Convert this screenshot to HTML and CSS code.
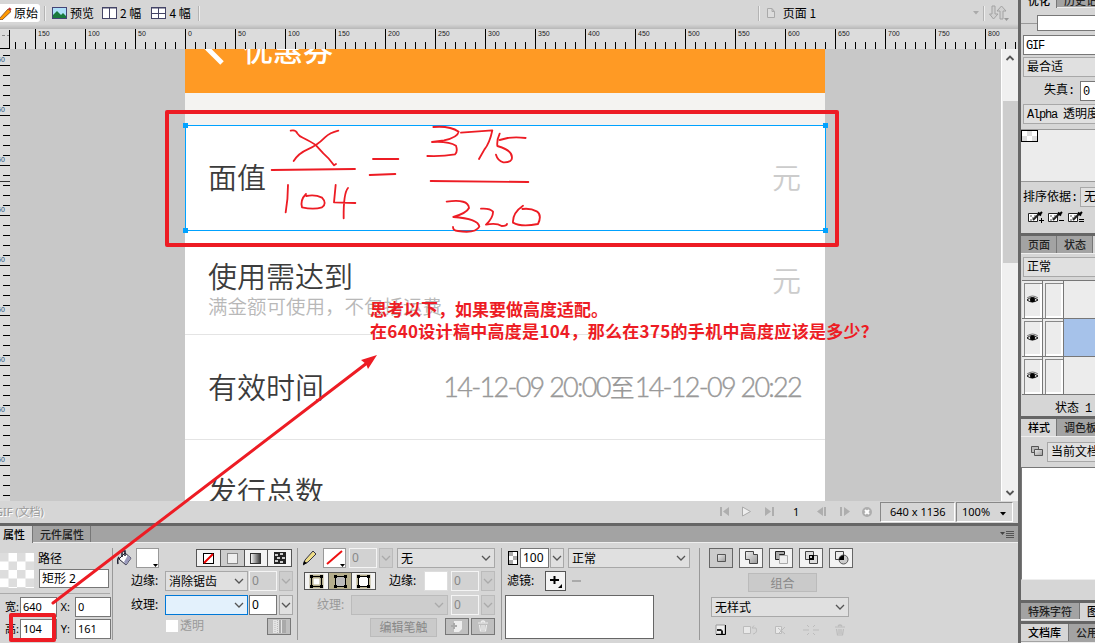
FILE: index.html
```html
<!DOCTYPE html>
<html lang="zh-CN">
<head>
<meta charset="utf-8">
<title>页面 1</title>
<link rel="stylesheet" href="styles.css">
</head>
<body>
<svg width="0" height="0" class="defs">
  <defs>
    <pattern id="chk2" width="17" height="17" patternUnits="userSpaceOnUse"><rect width="17" height="17" fill="#fff"/><path d="M0 0h8.500v8.500h-8.500zM8.500 8.500h8.500v8.500h-8.500z" fill="#ddd"/></pattern>
    <linearGradient id="gr"><stop offset="0" stop-color="#fff"/><stop offset="1" stop-color="#333"/></linearGradient>
    <linearGradient id="dg" x2="1" y2="1"><stop offset="0" stop-color="#eee"/><stop offset="1" stop-color="#999"/></linearGradient>
    <symbol id="eye" viewBox="0 0 13 10"><path d="M1 5Q6 0 12 5Q6 9 1 5z" fill="#ddd" stroke="#111"/><circle cx="6.500" cy="4.800" r="2.500" fill="#000"/><path d="M1 3Q6.500-1 12 3" fill="none" stroke="#555" stroke-width=".8"/></symbol>
    <symbol id="down" viewBox="0 0 10 6"><path d="M1 1l4 4 4-4" fill="none" stroke="currentColor" stroke-width="1.300"/></symbol>
    <symbol id="trash" viewBox="0 0 12 12"><path d="M1 3h10M4 2q2-2 4 0M2.500 5l1 6h5l1-6M5 5v5M7 5v5" fill="none" stroke="currentColor" stroke-width="1.200"/></symbol>
    <symbol id="dropper" viewBox="0 0 17 12"><path d="M.5 2.500h9v8h-9z" fill="#fff" stroke="#222"/><path d="M2 4h2v2h-2zM6 4h2v2h-2zM4 6h2v2h-2zM2 8h2v2h-2z" fill="#aaa"/><path d="M5 9l6-6" stroke="#222" stroke-width="2"/><path d="M10 1.500l3 3M11 4l3-3" stroke="#000" stroke-width="2"/></symbol>
  </defs>
</svg>
<div class="app">
  <main class="left">
    <div class="toolbar">
      <div class="mode on"><svg width="12" height="13" viewBox="0 0 12 13"><path d="M-1 12L8 2l3 2.500L2 13z" fill="#f90" stroke="#742" stroke-width=".8"/><path d="M8 2l1.500-1.500 2 1.500-1 2z" fill="#b33"/></svg>原始</div>
      <i class="sep s1"></i>
      <div class="mode m2"><svg width="15" height="12"><rect x=".5" y=".5" width="14" height="11" fill="#aee0fa" stroke="#447"/><path d="M1 11V8l4-4 4 4 2-2 3 3v2z" fill="#197a3d"/></svg>预览</div>
      <div class="mode m3"><svg width="15" height="12"><rect x=".5" y=".5" width="14" height="11" fill="#fff" stroke="#446"/><path d="M7.500 0v12M0 1h15" stroke="#446"/></svg>2 幅</div>
      <div class="mode m4"><svg width="15" height="12"><rect x=".5" y=".5" width="14" height="11" fill="#fff" stroke="#446"/><path d="M7.500 0v12M0 1h15M0 6.500h15" stroke="#446"/></svg>4 幅</div>
      <i class="sep s2"></i>
      <i class="sep s3"></i>
      <div class="doc"><svg width="8" height="10"><path d="M.5.5h4.500l2.500 3v6h-7zM5 .5v3h2.500" fill="#ddd" stroke="#aaa"/></svg>页面 1</div>
      <svg class="docmenu" width="6" height="4"><path d="M0 0h6L3 3.500z" fill="#aaa"/></svg>
      <i class="sep s4"></i>
      <svg class="updown" width="21" height="17"><path d="M3 1h3v8h3l-4.500 5L.5 9H3zM11 14V6H8l4.500-5L17 6h-3v8z" fill="#d0d0d0" stroke="#a2a2a2"/><path d="M15 13h5l-2.500 3z" fill="#999"/></svg>
    </div>
    <svg class="hruler" width="1018" height="20">
      <defs>
        <pattern id="minor" x="5" width="10" height="20" patternUnits="userSpaceOnUse"><path d="M0 13h1v7h-1z"/></pattern>
        <pattern id="major" x="35" width="50" height="20" patternUnits="userSpaceOnUse"><path d="M0 0h1v20h-1z"/></pattern>
        <pattern id="vminor" y="6" width="10" height="10" patternUnits="userSpaceOnUse"><path d="M3 0h7v1h-7z"/></pattern>
        <pattern id="vmajor" y="16" width="10" height="50" patternUnits="userSpaceOnUse"><path d="M0 0h10v1h-10z"/></pattern>
      </defs>
      <rect x="11" width="1007" height="20" fill="url(#minor)"/><rect x="11" width="1007" height="20" fill="url(#major)"/>
      <path d="M9.500 1v19M0 19.500h10" stroke="#000"/><path d="M2 6.500h7" stroke="#888" stroke-dasharray="3 2"/>
      <g class="nums"><text x="38" y="7">150</text><text x="88" y="7">100</text><text x="138" y="7">50</text><text x="188" y="7">0</text><text x="238" y="7">50</text><text x="288" y="7">100</text><text x="338" y="7">150</text><text x="388" y="7">200</text><text x="438" y="7">250</text><text x="488" y="7">300</text><text x="538" y="7">350</text><text x="588" y="7">400</text><text x="638" y="7">450</text><text x="688" y="7">500</text><text x="738" y="7">550</text><text x="788" y="7">600</text><text x="838" y="7">650</text><text x="888" y="7">700</text><text x="938" y="7">750</text><text x="988" y="7">800</text></g>
    </svg>
    <div class="work">
      <svg class="vruler" width="10" height="452">
        <rect width="10" height="452" fill="url(#vminor)"/><rect width="10" height="452" fill="url(#vmajor)"/><path d="M0 132.500h10" stroke="#333"/>
        <g class="nums blue"><text x="-3" y="13">50</text><text x="-3" y="63">50</text><text x="-3" y="113">50</text><text x="-3" y="163">50</text><text x="-3" y="213">50</text><text x="-3" y="263">50</text><text x="-3" y="313">50</text><text x="-3" y="363">50</text><text x="-3" y="413">50</text></g>
      </svg>
      <div class="stage">
        <div class="phone">
          <header class="head"><svg width="40" height="16"><path d="M19-4L37 14" stroke="#fff" stroke-width="5"/></svg><span>优惠券</span></header>
          <div class="gap"></div>
          <div class="item first"><span class="name">面值</span><span class="unit">元</span></div>
          <div class="item second"><div><div class="name">使用需达到</div><div class="hint">满金额可使用，不包括运费</div></div><span class="unit">元</span></div>
          <div class="item third"><span class="name">有效时间</span><span class="date">14-12-09 20:00<b>至</b>14-12-09 20:22</span></div>
          <div class="item last"><span class="name">发行总数</span></div>
        </div>
      </div>
      <div class="scroll"><svg width="10" height="6"><path d="M1.500 5l3.500-3.500L8.500 5" fill="none" stroke="#555" stroke-width="1.800"/></svg><i></i><svg width="10" height="6"><path d="M1.500 1l3.500 3.500L8.500 1" fill="none" stroke="#555" stroke-width="1.800"/></svg></div>
    </div>
    <div class="status">
      <span class="gif">GIF (文档)</span>
      <svg class="nav" width="160" height="12" fill="#aeaeae"><path d="M0 1h2v9H0zM9 1v9L3 5.500zM45 1v9l6-4.500zM52 1h2v9h-2zM103 1v9l-6-4.500zM104 1h2v9h-2zM120 1h2v9h-2zM124 1v9l6-4.500z"/><path d="M22.500 1v9l8-4.500z" fill="#eee" stroke="#aaa"/><text x="73" y="10" class="pg">1</text><circle cx="147" cy="6" r="5"/><path d="M145 4l4 4M149 4l-4 4" stroke="#fff" stroke-width="2"/></svg>
      <div class="cell c1">640 x 1136</div><div class="cell c2">100%<svg width="6" height="4"><path d="M0 0h6L3 3.500z"/></svg></div>
    </div>
    <div class="tabs ptabs"><span class="tab on">属性</span><span class="tab">元件属性</span><svg width="15" height="9"><path d="M0 2h5l-2.500 3z" fill="#444"/><path d="M6 1.500h8M6 3.500h8M6 5.500h8M6 7.500h8" stroke="#555"/></svg></div>
    <div class="props">
      <section class="p1">
        <div class="obj"><svg width="34" height="35"><rect width="34" height="35" fill="url(#chk2)"/></svg><div><div class="txt">路径</div><div class="in tall">矩形 2</div></div></div>
        <div class="size"><span>宽:</span><b class="in">640</b><span>X:</span><b class="in">0</b><span>高:</span><b class="in">104</b><span>Y:</span><b class="in">161</b></div>
      </section>
      <section class="p2">
        <div class="row r1"><svg width="15" height="16"><path d="M2 9l6-6 6 5-5 7z" fill="#fff" stroke="#223"/><path d="M7 12l4-7 3 3-5 7z" fill="#99b"/><path d="M5 7V1h3v5M2 7q-2 2-1 7" fill="none" stroke="#223" stroke-width="1.500"/></svg><div class="sw a"><svg width="5" height="3"><path d="M0 0h5L2.500 3z"/></svg></div>
          <div class="group"><i><svg width="11" height="11"><rect x=".5" y=".5" width="10" height="10" fill="#fff" stroke="#000"/><path d="M1 10L10 1" stroke="#e00" stroke-width="2"/></svg></i><i class="sel"><svg width="11" height="11"><rect x=".5" y=".5" width="10" height="10" fill="#eee" stroke="#888"/></svg></i><i><svg width="11" height="11"><rect x=".5" y=".5" width="10" height="10" fill="url(#gr)" stroke="#333"/></svg></i><i><svg width="12" height="12"><rect width="12" height="12" fill="#222"/><path d="M1 2h3v2h-3zM6 1h3v2h-3zM3 5h3v2h-3zM8 5h3v2h-3zM1 8h3v2h-3zM6 9h3v2h-3z" fill="#ccc"/></svg></i></div></div>
        <div class="row r2"><label>边缘:</label><div class="select">消除锯齿<svg><use href="#down"/></svg></div><div class="in dis">0</div><div class="mini dis"><svg><use href="#down"/></svg></div></div>
        <div class="row r3"><label>纹理:</label><div class="select hot"><svg><use href="#down"/></svg></div><div class="in">0</div><div class="mini"><svg><use href="#down"/></svg></div></div>
        <div class="row r4"><i class="check"></i><span class="mute">透明</span><div class="btn"><svg width="13" height="13"><rect width="13" height="13" fill="#e4e4e4"/><path d="M6 0h2v13H6zM9 0h4v13H9z" fill="#aaa"/><path d="M2 1v12M4.500 0v13" stroke="#bbb" stroke-dasharray="1 1"/></svg></div></div>
      </section>
      <section class="p3">
        <div class="row r1"><svg width="15" height="16"><path d="M0 15l2-5L10 1l3 3L5 12z" fill="#ed8" stroke="#334"/><path d="M0 15l1-4 3 2z"/></svg><div class="sw b"><svg class="stroke" width="19" height="15"><path d="M2 14L17 1" stroke="#e11" stroke-width="2"/></svg><svg width="5" height="3"><path d="M0 0h5L2.500 3z"/></svg></div><div class="in dis">0</div><div class="mini dis"><svg><use href="#down"/></svg></div><div class="select none">无<svg><use href="#down"/></svg></div></div>
        <div class="row r2"><div class="group"><i><svg width="15" height="15"><path d="M2.500 2.500h10v10h-10z" fill="#fff" stroke="#b5ae8c" stroke-width="4"/><path d="M2.500 2.500h10v10h-10z" fill="none" stroke="#000"/><path d="M1 1h3v3h-3zM11 1h3v3h-3zM1 11h3v3h-3zM11 11h3v3h-3z"/></svg></i><i class="sel tan"><svg width="15" height="15"><path d="M2.500 2.500h10v10h-10z" fill="#bbb" stroke="#000"/><path d="M1 1h3v3h-3zM11 1h3v3h-3zM1 11h3v3h-3zM11 11h3v3h-3z"/></svg></i><i><svg width="15" height="15"><path d="M2.500 2.500h10v10h-10z" fill="#fff" stroke="#b5ae8c" stroke-width="4"/><path d="M2.500 2.500h10v10h-10z" fill="#fff" stroke="#000"/><path d="M1 1h3v3h-3zM11 1h3v3h-3zM1 11h3v3h-3zM11 11h3v3h-3z"/></svg></i></div><label>边缘:</label><div class="sw c"></div><div class="in dis">0</div><div class="mini dis"><svg><use href="#down"/></svg></div></div>
        <div class="row r3"><label class="mute">纹理:</label><div class="select dis"><svg><use href="#down"/></svg></div><div class="in dis">0</div><div class="mini dis"><svg><use href="#down"/></svg></div></div>
        <div class="row r4"><div class="edit">编辑笔触</div><div class="btn"><svg width="12" height="11"><path d="M3 0h8v8l-3 3H3z" fill="#eee"/><path d="M0 5h6M3 2v6" stroke="#aaa" stroke-width="2"/></svg></div><div class="btn"><svg class="lite" width="12" height="12"><use href="#trash"/></svg></div></div>
      </section>
      <section class="p4">
        <div class="row r1"><svg width="10" height="14"><rect x=".5" y=".5" width="9" height="13" fill="#fff" stroke="#000"/><path d="M1 1h4v4h-4zM5 5h4v4h-4zM1 9h4v4h-4z" fill="#aaa"/></svg><div class="in">100</div><div class="mini"><svg><use href="#down"/></svg></div><div class="select blend">正常<svg><use href="#down"/></svg></div></div>
        <div class="row r2"><label>滤镜:</label><div class="plus"><svg width="17" height="16"><path d="M4 8h9M8.500 4v8" stroke="#000" stroke-width="2"/><path d="M16 12v4h-4z"/></svg></div><i class="minus"></i></div>
        <div class="list"></div>
      </section>
      <section class="p5">
        <div class="ops"><i class="sel"><svg width="15" height="14"><path d="M3.500 3.500h8v7h-8z" fill="url(#dg)" stroke="#555"/></svg></i><i><svg width="15" height="14"><path d="M1.500.5h8v3h4v9h-8v-4h-4z" fill="url(#dg)" stroke="#444"/></svg></i><i><svg width="15" height="14"><path d="M1.500.5h9v3h-5v5h-4z" fill="#aaa" stroke="#222"/><path d="M5.500 4.500h8v8h-8z" fill="#eee" stroke="#aaa"/></svg></i><i><svg width="15" height="14"><path d="M1.500.5h8v8h-8zM5.500 4.500h8v8h-8z" fill="#ddd" stroke="#444"/><path d="M5 4h5v5H5z"/><path d="M6 5h2v2H6z" fill="#ccc"/></svg></i><i><svg width="15" height="14"><path d="M1.500.5h8v8h-8z" fill="#eee" stroke="#444"/><circle cx="9.500" cy="8.500" r="4.500" fill="#ccc" stroke="#555"/><path d="M5 9q0-4 5-5v5z"/></svg></i></div>
        <div class="combine">组合</div>
        <div class="select style">无样式<svg><use href="#down"/></svg></div>
        <svg class="acts" width="140" height="12"><path d="M1 1h9v9H1z" fill="#eee" stroke="#999"/><path d="M1 10.500h9.500V1" fill="none" stroke="#000"/><path d="M2 5h4l2 2v3H6V7H2z" fill="#222"/><g fill="#e8e8e8" stroke="#bcbcbc"><path d="M28.500 2.500h7v7h-7zM60.500 2.500h6v7h-6z"/><path d="M38 10q5-1 3-6h-4l2-2.500M63 4l7 6M70 3l-7 7M88 6h6M98 6h6M94 3l-2-2M98 3l2-2M94 9l-2 2M98 9l2 2" fill="none"/></g><use href="#trash" x="119" width="12" height="12" color="#bcbcbc"/></svg>
      </section>
    </div>
  </main>
  <aside class="right">
    <div class="tabs t0"><span class="tab on">优化</span><span class="tab">历史记录</span></div>
    <div class="saved"><i></i><b></b></div>
    <div class="fld in gifin"><span class="lat">GIF</span></div>
    <div class="fld select">最合适</div>
    <div class="loss"><span>失真:</span><div class="in">0</div></div>
    <div class="fld select alpha"><span><span class="lat">Alpha </span>透明度</span></div>
    <div class="palette"><svg width="17" height="12"><rect width="17" height="12"/><path d="M1 1h15v10H1z" fill="#fff"/><path d="M6 1h5v5H6zM1 6h5v5H1zM11 6h5v5h-5z" fill="#ddd"/></svg></div>
    <div class="sort"><span>排序依据:</span><div class="select">无</div></div>
    <div class="drops"><svg width="17" height="12"><use href="#dropper"/><path d="M11 9.500h5M13.500 7v5" stroke="#000"/></svg><svg width="17" height="12"><use href="#dropper"/><path d="M11 9.500h5" stroke="#000"/></svg><svg width="17" height="12"><use href="#dropper"/><path d="M11 8.500h5M11 10.500h5" stroke="#000"/></svg></div>
    <div class="tabs t1"><span class="tab">页面</span><span class="tab">状态</span><span class="tab on"></span></div>
    <div class="fld select normal">正常</div>
    <div class="layers">
      <div class="layer"><i><svg width="13" height="10"><use href="#eye"/></svg></i><i></i><b></b></div>
      <div class="layer cur"><i><svg width="13" height="10"><use href="#eye"/></svg></i><i></i><b></b></div>
      <div class="layer"><i><svg width="13" height="10"><use href="#eye"/></svg></i><i></i><b></b></div>
    </div>
    <div class="state">状态<span class="lat"> 1</span></div>
    <div class="tabs t2"><span class="tab on">样式</span><span class="tab">调色板</span></div>
    <div class="lib"><svg width="13" height="12"><path d="M.5 1.500h7v6h-7z" fill="#bbb" stroke="#555"/><path d="M3.500 4.500h8v6h-8z" fill="url(#dg)" stroke="#555"/></svg><div class="select">当前文档</div></div>
    <div class="styles"></div>
    <div class="tabs t3"><span class="tab">特殊字符</span><span class="tab on">图像</span></div>
    <div class="tabs t4"><span class="tab on">文档库</span><span class="tab">公用库</span></div>
  </aside>
</div>
<svg class="marks" width="1095" height="643" fill="none">
  <g stroke="#00a2ff"><rect x="185.500" y="125.500" width="640" height="105"/></g>
  <path d="M183 123h5v5h-5zM823 123h5v5h-5zM183 228h5v5h-5zM823 228h5v5h-5z" fill="#00a2ff"/>
  <g stroke="#ed1c24" stroke-linejoin="round" stroke-linecap="round">
    <rect x="167" y="112" width="670" height="133" stroke-width="4"/>
    <rect x="11" y="615" width="43" height="25" stroke-width="4"/>
    <path d="M53 603L367 363" stroke-width="3"/>
    <g transform="translate(160 105) scale(.33333)" stroke-width="5.500">
      <path d="M392 77q15-4 20 8q5 9 18 14q25 12 38 22l22 24q18 15 32 36l6-4M535 77q-25 6-40 20q-25 25-52 36q-28 12-42 35M335 195L585 192M384 240q0 42-7 82M438 267q-18 18-12 40q35 8 60 0q16-12 0-29q-22-11-47-5M527 240L522 292L586 294M564 249Q550 265 551 340M639 162H715M629 210L706 207"/>
      <path d="M820 66q50-4 76 14q-3 18-44 26l-36 5q50-3 72 11q6 18-3 26q-38 7-83 5M903 83L997 76q-8 38-24 58l-16 28M1097 99q-30-4-54 0l-24 6M1019 86Q1010 105 1012 123Q1062 137 1055 163Q1050 173 1030 172Q1013 167 1008 149M812 228L1105 231"/>
      <path d="M860 290Q925 281 927 309Q920 324 880 336Q955 341 958 365Q947 386 894 378Q879 377 879 366M963 311Q990 309 999 320Q1000 337 978 359Q1010 353 1025 363Q1040 363 1041 357M1089 302Q1057 324 1059 353Q1084 367 1134 357Q1147 330 1130 319Q1112 309 1087 312"/>
    </g>
  </g>
  <path d="M377 355L361 360l5 4 2 5z" fill="#ed1c24"/>
</svg>
<div class="note">思考以下，如果要做高度适配。<br><span>在640设计稿中高度是104，那么在375的手机中高度应该是多少？</span></div>
</body>
</html>
```
FILE: styles.css
```css
* { box-sizing: border-box; }
body { margin: 0; width: 1095px; height: 643px; overflow: hidden; position: relative; background: #d6d6d6; color: #000; font: 12px/16px "Noto Sans", "Noto Sans CJK SC", sans-serif; }
svg { display: block; flex: none; }
i, b { font-style: normal; font-weight: normal; }
.defs { position: absolute; }
.app { display: flex; height: 643px; }
.left { width: 1018px; flex: none; }
.right { width: 77px; flex: none; border-left: 3px solid #666; overflow: hidden; height: 643px; font-family: "Liberation Mono", "Noto Sans CJK SC", monospace; white-space: nowrap; }

/* document toolbar */
.toolbar { height: 29px; display: flex; align-items: flex-start; padding-top: 4px; background: linear-gradient(#d6d6d6 24px, #b8b8b8); font-family: "Noto Sans CJK SC", sans-serif; }
.mode { display: flex; align-items: center; gap: 3px; height: 18px; }
.mode.on { background: #fff; width: 40px; gap: 2px; border-radius: 0 3px 3px 0; }
.m2 { margin-left: 6px; }
.m3 { margin-left: 8px; }
.m4 { margin-left: 10px; }
.sep { width: 2px; height: 15px; margin-top: 2px; background: #b4b4b4; border-right: 1px solid #eee; }
.s1 { margin-left: 4px; }
.s2 { margin-left: 7px; }
.s3 { margin-left: 558px; }
.s4 { margin-left: 4px; }
.doc { display: flex; align-items: center; height: 18px; gap: 8px; margin-left: 7px; width: 198px; }
.docmenu { margin: 7px 0 0 8px; }
.updown { margin: 1px 0 0 4px; }
.hruler, .vruler { background: #dcdcdc; overflow: hidden; }
.nums { font: 7px "Liberation Sans", sans-serif; fill: #222; }
.blue { fill: #26567f; }

/* canvas */
.work { display: flex; height: 452px; }
.stage { width: 991px; background: #c8c8c8; padding-left: 175px; overflow: hidden; }
.phone { width: 640px; height: 452px; overflow: hidden; background: #fff; font-family: "Noto Sans CJK SC", sans-serif; font-weight: 350; color: #3c3c3c; }
.head { height: 44px; background: #ff9a24; display: flex; color: #fff; font-size: 30px; font-weight: 500; line-height: 30px; overflow: hidden; }
.head span { margin: -16px 0 0 18px; }
.gap { height: 32px; background: #f4f3f1; }
.item { display: flex; justify-content: space-between; padding: 0 24px 2px 23px; border-bottom: 1px solid #e4e4e4; height: 105px; align-items: center; }
.name { font-size: 29px; line-height: 40px; }
.unit { font-size: 29px; color: #ccc; line-height: 40px; }
.first { height: 106px; padding-bottom: 4px; }
.second { height: 104px; }
.second .name { line-height: 32px; margin-top: 16px; }
.second .hint { font-size: 19.500px; line-height: 28px; padding-top: 1px; color: #b8b8b8; }
.second .unit { margin-top: -6px; }
.last { padding-bottom: 4px; }
.date { font: 300 27px/40px Lato, sans-serif; color: #999; letter-spacing: -1.720px; white-space: nowrap; -webkit-text-stroke: .4px #999; }
.date b { font: 350 25px/40px "Noto Sans CJK SC", sans-serif; -webkit-text-stroke: 0; letter-spacing: 0; }
.scroll { width: 17px; background: #f0f0f0; border-left: 1px solid #fff; display: flex; flex-direction: column; align-items: center; padding: 6px 0 5px; }
.scroll i { width: 15px; height: 162px; background: #cdcdcd; margin: 40px 0 auto; }

/* status bar */
.status { height: 22px; display: flex; align-items: center; }
.gif { width: 725px; margin-left: -5px; color: #999; text-shadow: 1px 1px #fff; font-size: 11px; }
.pg { fill: #000; font-size: 11px; }
.cell { height: 20px; line-height: 18px; border: 1px solid #fff; border-top-color: #888; border-left-color: #888; font-size: 11px; padding-left: 9px; white-space: nowrap; }
.c1 { width: 75px; }
.c2 { width: 57px; margin-left: 1px; display: flex; align-items: center; gap: 10px; padding-left: 5px; }
.c2 svg { margin-top: 3px; }

/* tab strips */
.tabs { display: flex; height: 20px; background: #a3a3a3; border-top: 3px solid #666; border-bottom: 1px solid #eee; font: 500 11px/17px "Noto Sans CJK SC", sans-serif; white-space: nowrap; }
.tab { border-right: 1px solid #777; padding: 0 7px; color: #222; flex: none; }
.tab.on { background: #d6d6d6; color: #000; height: 17px; }
.ptabs .tab { padding: 0 7px; width: 58px; }
.ptabs .tab:first-child { width: 33px; padding: 0 0 0 3px; }
.ptabs svg { margin: 4px 0 0 909px; }

/* shared controls */
.in { background: #fff; border: 1px solid #777; height: 20px; line-height: 17px; padding-left: 2px; font-size: 12px; overflow: hidden; white-space: nowrap; flex: none; }
.in.dis { background: #d2d2d2; border-color: #f4f4f4; color: #888; }
.select, .mini { height: 20px; background: #e0e0e0; border: 1px solid #a8a8a8; line-height: 17px; padding: 0 3px; font-size: 12px; color: #000; display: flex; justify-content: space-between; align-items: center; overflow: hidden; flex: none; }
.select svg, .mini svg { width: 10px; height: 6px; color: #555; }
.mini { width: 14px; padding: 0 1px; }
.select.dis, .mini.dis { background: #cdcdcd; border-color: #bbb; }
.mini.dis svg, .select.dis svg { color: #aaa; }
.select.hot { background: #e3f1fc; border-color: #0078d7; }
.mute { color: #999; }
.sw { height: 20px; background: #fff; border: 1px solid #999; display: flex; align-items: flex-end; justify-content: flex-end; }
.group { display: flex; height: 18px; border: 1px solid #555; width: 96px; }
.group i { flex: 1; display: grid; place-items: center; background: #f3f3f3; border-right: 1px solid #555; }
.group i:last-child { border: 0; }
.group .sel, .ops .sel { background: #ccc; }
.group .tan { background: #b5ae8c; }
.btn { width: 24px; height: 17px; border: 1px solid #777; background: #bfbfbf; display: grid; place-items: center; }
.lite { color: #eee; }

/* property inspector */
.props { display: flex; align-items: flex-end; height: 100px; padding-bottom: 3px; }
.props section { height: 92px; flex: none; border-left: 1px solid #999; }
.props .p1 { height: 95px; width: 112px; border: 0; }
.row { display: flex; height: 20px; align-items: center; }
.r2 { margin-top: 3px; }
.r3 { margin-top: 4px; }
.r4 { margin-top: 1px; }
.row label { width: 34px; line-height: 18px; }
.row .in { width: 28px; }
.p2 { width: 186px; padding-left: 4px; }
.p3 { width: 204px; padding-left: 5px; margin-left: -1px; }
.p4 { width: 198px; padding-left: 3px; }
.p5 { width: 310px; padding-left: 9px; }
.obj { display: flex; gap: 4px; height: 49px; border-bottom: 1px solid #aaa; align-items: flex-start; padding-top: 3px; margin-right: 2px; }
.obj svg { margin-top: 5px; }
.obj .txt { line-height: 21px; }
.tall { width: 70px; height: 19px; margin-left: 1px; }
.size { display: grid; grid-template-columns: 20px 37px 18px 36px; grid-auto-rows: 20px; row-gap: 2px; padding-top: 3px; line-height: 20px; }
.size span { font-size: 11px; text-align: right; padding-right: 1px; white-space: nowrap; }
.size span:nth-of-type(2n) { padding-right: 5px; }
.size b { font-size: 11px; line-height: 18px; }
.a { width: 23px; margin-left: 4px; }
.p2 .group { margin-left: 37px; }
.p2 label { margin-left: 14px; }
.p2 .select { width: 83px; }
.p2 .in { margin-left: 1px; }
.p2 .mini { margin-left: 2px; }
.hot svg { margin-left: auto; }
.check { width: 12px; height: 12px; background: #fff; margin: 0 2px 0 49px; }
.p2 .r4 .btn { margin-left: 63px; }
.b { width: 23px; margin-left: 5px; position: relative; }
.stroke { position: absolute; left: 1px; top: 1px; }
.p3 .r1 .in { margin-left: 3px; }
.p3 .r1 .mini { margin-left: 2px; }
.none { width: 98px; margin-left: 4px; }
.p3 .group { width: 72px; }
.p3 .r2 { padding-left: 1px; }
.p3 .r2 label { margin-left: 13px; }
.c { width: 24px; border-color: #ddd; margin-left: 1px; }
.p3 .r2 .in, .p3 .r3 .in { margin-left: 3px; }
.p3 .r2 .mini, .p3 .r3 .mini { margin-left: 2px; }
.p3 .r3 label { margin-left: 14px; }
.p3 .select.dis { width: 97px; }
.select.dis svg { margin-left: auto; }
.edit { width: 67px; height: 19px; margin: 3px 8px 0 67px; border: 1px solid #bbb; background: #cacaca; color: #888; text-align: center; line-height: 17px; }
.p3 .btn + .btn { margin-left: 2px; }
.p4 .r1 { padding-left: 3px; }
.p4 .r1 .in { margin-left: 2px; width: 29px; }
.p4 .mini { margin-left: 1px; }
.blend { width: 122px; margin-left: 4px; }
.p4 label { margin-left: 2px; width: 38px; }
.plus { width: 21px; height: 20px; border: 1px solid #555; background: #f4f4f4; }
.minus { width: 9px; height: 2px; background: #aaa; margin-left: 6px; }
.list { width: 149px; height: 44px; margin-top: 4px; background: #fff; border: 1px solid #666; }
.ops { display: flex; gap: 6px; }
.ops i { width: 24px; height: 20px; border: 1px solid #666; background: #f3f3f3; display: grid; place-items: center; }
.combine { width: 69px; height: 19px; line-height: 20px; margin: 5px 0 0 39px; border: 1px solid #bbb; background: #cacaca; color: #888; text-align: center; }
.style { width: 138px; margin: 5px 0 0 2px; }
.acts { margin: 7px 0 0 6px; }

/* right docks */
.right .tab { padding: 0 7px; }
.right .select, .right .in { line-height: 20px; }
.right .fld.select { padding-top: 2px; }
.lat { letter-spacing: -1.200px; white-space: pre; }
.t0 { height: 8px; border-top: 0; line-height: 1px; }
.t0 .tab { line-height: 0; overflow: visible; }
.t0 .tab.on { height: 8px; width: 36px; }
.saved { display: flex; height: 27px; padding-top: 7px; }
.saved i { width: 16px; height: 9px; border-bottom: 1px solid #999; }
.saved b { width: 60px; height: 16px; background: #fff; border: 1px solid #777; border-right: 0; }
.fld { margin: 0 -8px 2px 2px; width: 80px; }
.loss { display: flex; padding: 2px 0 3px 23px; width: 100px; height: 25px; }
.loss span { width: 36px; line-height: 20px; }
.loss .in { width: 30px; }
.alpha { margin: 0 0 5px 2px; }
.palette { width: 80px; height: 53px; background: #ececec; border-top: 1px solid #999; border-bottom: 1px solid #999; }
.sort { display: flex; padding: 5px 0 0 2px; width: 110px; height: 27px; }
.sort span { width: 57px; line-height: 23px; }
.sort .select { width: 40px; padding-top: 2px; }
.drops { display: flex; gap: 3px; padding: 2px 0 0 7px; height: 24px; }
.t1 { height: 21px; }
.t1 .tab:not(.on) { width: 36px; }
.t1 .tab.on { width: 10px; }
.normal { margin: 3px 0 3px 2px; }
.layers { margin-left: 1px; border-top: 1px solid #777; background: #ececec; height: 115px; }
.layer { display: flex; height: 38px; border-bottom: 1px solid #777; width: 80px; }
.layer i { width: 21px; border-right: 1px solid #777; display: grid; place-items: center; box-shadow: inset 2px 2px #ececec, inset 3px 3px #888, inset -2px -2px #fff; }
.layer b { flex: 1; }
.cur b { background: #a6c2ea; }
.state { height: 21px; padding: 6px 0 0 34px; }
.t2 { height: 21px; }
.t2 .tab.on { width: 36px; }
.lib { display: flex; gap: 3px; padding: 5px 0 0 10px; height: 30px; }
.lib svg { margin-top: 3px; }
.lib .select { width: 60px; padding-top: 2px; }
.styles { height: 113px; background: #fff; border-top: 1px solid #777; border-left: 1px solid #777; border-bottom: 1px solid #eee; margin-bottom: 20px; }
.t3 { margin-bottom: 1px; }
.t3 .tab:first-child { width: 59px; }
.t4 .tab:first-child { width: 48px; }
.t4 { height: 22px; }

/* annotation layer */
.marks { position: absolute; left: 0; top: 0; }
.note { position: absolute; left: 370px; top: 298px; font: 700 17px/22px "Noto Sans CJK SC", sans-serif; color: #ed1c24; white-space: nowrap; }
.note span { letter-spacing: .3px; }
```
